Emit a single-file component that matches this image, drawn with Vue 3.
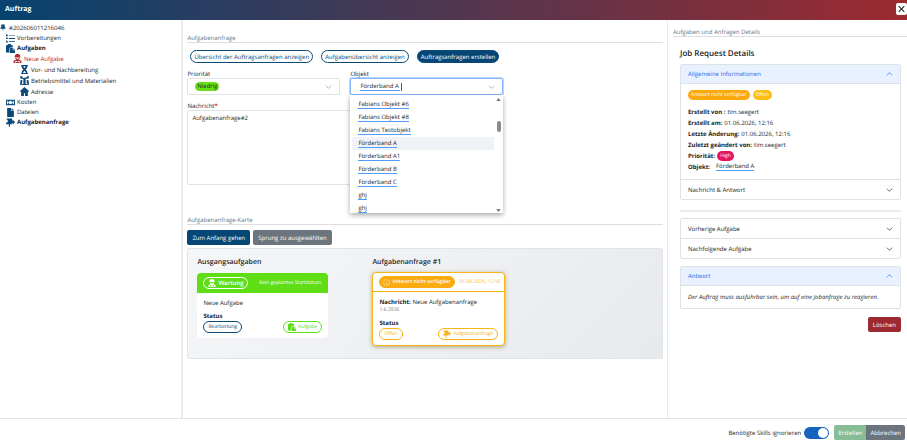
<script setup>
import { ref } from 'vue'

const tree = [
  { label: 'Vorbereitungen', icon: 'list', level: 1 },
  { label: 'Aufgaben', icon: 'paste', level: 1, strong: true },
  { label: 'Neue Aufgabe', icon: 'worker', level: 2, active: true },
  { label: 'Vor- und Nachbereitung', icon: 'hourglass', level: 3 },
  { label: 'Betriebsmittel und Materialien', icon: 'tools', level: 3 },
  { label: 'Adresse', icon: 'home', level: 3 },
  { label: 'Kosten', icon: 'money', level: 1 },
  { label: 'Dateien', icon: 'file', level: 1 },
  { label: 'Aufgabenanfrage', icon: 'request', level: 1, strong: true },
]

const icons = {
  pin: 'M3 0h10v2h-1l1 5 2 2v2H9v4l-1 1-1-1v-4H1V9l2-2 1-5H3z',
  list: 'M0 1h3v3H0zM5 2h11v1H5zM0 6h3v3H0zM5 7h11v2H5zM0 12h3v3H0zM5 13h11v1H5z',
  paste: 'M0 2h3a3 3 0 0 1 6 0h3v4H8L6 8v7H0zM7 7h5v4h4v5H7zM13 7l3 3h-3z',
  worker: 'M3 5a5 5 0 0 1 3-5h4a5 5 0 0 1 3 5v1H3zM4 7h2a2 2 0 0 0 4 0h2a4 4 0 0 1-2 3l5 2v4h-3v-3l-2-1-2 2-2-2-2 1v3H1v-4l5-2a4 4 0 0 1-2-3zM5 14h6v2H5z',
  hourglass: 'M2 0h12v2h-1c0 3-1 4-3 6 2 2 3 3 3 6h1v2H2v-2h1c0-3 1-4 3-6-2-2-3-3-3-6H2zM6 2l1 3h2l1-3zM8 10l-3 4h6z',
  tools: 'M0 0l4 1 1 2h6l1-2 4-1-1 5h-5v9h3v2H3v-2h3V5H1zM1 7h3v5l-2 4H0zM12 7h3l1 9h-2l-2-4z',
  home: 'M8 0l8 7-1 2-1-1v8H9v-5H7v5H2V8L1 9 0 7z',
  money: 'M0 3h16v10H0zM2 5v6h1l2-3-2-3zM8 5a3 3 0 1 0 0 6 3 3 0 0 0 0-6zM13 5l-2 3 2 3h1V5z',
  file: 'M2 0h7v5h5v11H2zM10 0l4 4h-4z',
  request: 'M1 1h10v4h1V3l4 4-4 5V9h-2l1 2H7v4l-1 1-1-1v-4H0V9l3-2V3H1z',
}

const options = ['Fabians Objekt #6', 'Fabians Objekt #8', 'Fabians Testobjekt', 'Förderband A', 'Förderband A1', 'Förderband B', 'Förderband C', 'ghj', 'ghj']

const details = [
  ['Erstellt von :', 'tim.seegert'],
  ['Erstellt am:', '01.06.2026, 12:16'],
  ['Letzte Änderung:', '01.06.2026, 12:16'],
  ['Zuletzt geändert von:', 'tim.seegert'],
]

const objekt = ref('Förderband A')
const nachricht = ref('Aufgabenanfrage#2')
const ignoreSkills = ref(true)
</script>

<template>
  <div class="dialog">
    <header class="titlebar">
      <h1>Auftrag</h1>
      <button class="close" aria-label="Schließen">
        <svg viewBox="0 0 10 10"><path d="M1 1l8 8M9 1L1 9" /></svg>
      </button>
    </header>

    <div class="body">
      <nav class="tree" aria-label="Auftrag">
        <a href="#" class="node root"><svg class="icon" viewBox="0 0 16 16"><path :d="icons.pin" /></svg>#202606011216046</a>
        <a
          v-for="n in tree" :key="n.label" href="#"
          class="node" :class="['level' + n.level, { strong: n.strong, active: n.active }]"
        >
          <svg class="icon" viewBox="0 0 16 16"><path fill-rule="evenodd" :d="icons[n.icon]" /></svg>{{ n.label }}
        </a>
      </nav>

      <main class="main">
        <h2 class="legend">Aufgabenanfrage</h2>
        <div class="pills">
          <button class="pill">Übersicht der Auftragsanfragen anzeigen</button>
          <button class="pill">Aufgabenübersicht anzeigen</button>
          <button class="pill filled">Auftragsanfragen erstellen</button>
        </div>

        <div class="fields">
          <div class="field">
            <label for="prio">Priorität</label>
            <div class="control">
              <select id="prio" class="prio"><option>Niedrig</option></select>
              <svg class="chevron" viewBox="0 0 10 6"><path d="M1 1l4 4 4-4" /></svg>
            </div>
          </div>
          <div class="field">
            <label for="objekt">Objekt</label>
            <div class="control focused">
              <input id="objekt" v-model="objekt" class="objekt" role="combobox" aria-expanded="true">
              <span class="caret"></span>
              <svg class="chevron" viewBox="0 0 10 6"><path d="M1 1l4 4 4-4" /></svg>
            </div>
            <div class="menu">
              <ul role="listbox">
                <li v-for="(o, i) in options" :key="i" role="option" :class="{ selected: i === 3 }"><span>{{ o }}</span></li>
              </ul>
              <div class="scroll">
                <svg viewBox="0 0 6 4"><path d="M3 0l3 4H0z" /></svg>
                <i class="thumb"></i>
                <svg viewBox="0 0 6 4"><path d="M0 0h6L3 4z" /></svg>
              </div>
            </div>
          </div>
        </div>

        <label class="message-label" for="msg">Nachricht<b>*</b></label>
        <textarea id="msg" v-model="nachricht" class="message"></textarea>

        <h2 class="legend second">Aufgabenanfrage-Karte</h2>
        <div class="actions">
          <button class="btn navy">Zum Anfang gehen</button>
          <button class="btn gray">Sprung zu ausgewählten</button>
        </div>

        <section class="map">
          <div class="column">
            <h3>Ausgangsaufgaben</h3>
            <article class="card green">
              <div class="card-head">
                <span class="tag bold"><svg class="icon" viewBox="0 0 16 16"><path fill-rule="evenodd" :d="icons.worker" /></svg>Wartung</span>
                <span>Kein geplantes Startdatum.</span>
              </div>
              <div class="card-body">
                <p class="card-title">Neue Aufgabe</p>
                <strong>Status</strong>
                <div class="card-foot">
                  <span class="tag blue">Bearbeitung</span>
                  <span class="tag lime"><svg class="icon" viewBox="0 0 16 16"><path :d="icons.paste" /></svg>Aufgabe</span>
                </div>
              </div>
            </article>
          </div>
          <div class="column">
            <h3>Aufgabenanfrage #1</h3>
            <article class="card amber">
              <div class="card-head">
                <span class="tag bold solid"><svg class="info" viewBox="0 0 16 16"><circle cx="8" cy="8" r="7" /><path d="M8 7v5M8 4v1" /></svg>Antwort nicht verfügbar</span>
                <span>01.06.2026, 12:16</span>
              </div>
              <div class="card-body">
                <p class="card-title"><b>Nachricht:</b> Neue Aufgabenanfrage</p>
                <p class="date">1.6.2026</p>
                <strong>Status</strong>
                <div class="card-foot">
                  <span class="tag gold">Offen</span>
                  <span class="tag gold"><svg class="icon" viewBox="0 0 16 16"><path :d="icons.request" /></svg>Aufgabenanfrage</span>
                </div>
              </div>
            </article>
          </div>
        </section>
      </main>

      <aside class="side">
        <h2 class="legend">Aufgaben und Anfragen Details</h2>
        <div class="side-inner">
          <h3 class="side-title">Job Request Details</h3>
          <div class="accordion">
            <button class="acc-head open">Allgemeine Informationen<svg class="chevron" viewBox="0 0 10 6"><path d="M1 5l4-4 4 4" /></svg></button>
            <div class="acc-body">
              <div class="badges"><span class="badge orange">Antwort nicht verfügbar</span><span class="badge yellow">Offen</span></div>
              <p v-for="d in details" :key="d[0]"><b>{{ d[0] }}</b> {{ d[1] }}</p>
              <p><b>Priorität:</b> <span class="badge pink">High</span></p>
              <p class="object"><b>Objekt:</b> <a href="#">Förderband A</a></p>
            </div>
            <button class="acc-head">Nachricht &amp; Antwort<svg class="chevron" viewBox="0 0 10 6"><path d="M1 1l4 4 4-4" /></svg></button>
          </div>
          <hr>
          <div class="accordion">
            <button class="acc-head">Vorherige Aufgabe<svg class="chevron" viewBox="0 0 10 6"><path d="M1 1l4 4 4-4" /></svg></button>
            <button class="acc-head">Nachfolgende Aufgabe<svg class="chevron" viewBox="0 0 10 6"><path d="M1 1l4 4 4-4" /></svg></button>
          </div>
          <div class="accordion answer">
            <button class="acc-head open">Antwort<svg class="chevron" viewBox="0 0 10 6"><path d="M1 5l4-4 4 4" /></svg></button>
            <p class="note">Der Auftrag muss ausführbar sein, um auf eine Jobanfrage zu reagieren.</p>
          </div>
          <button class="btn red">Löschen</button>
        </div>
      </aside>
    </div>

    <footer class="footer">
      <label for="skills">Benötigte Skills ignorieren</label>
      <input id="skills" v-model="ignoreSkills" class="switch" type="checkbox">
      <div class="group">
        <button class="btn create">Erstellen</button>
        <button class="btn gray">Abbrechen</button>
      </div>
    </footer>
  </div>
</template>

<style>
body { margin: 0; background: #fff; }
</style>

<style scoped>
* { box-sizing: border-box; }
.dialog { display: flex; flex-direction: column; min-height: 100vh; font: 6px/8px "Open Sans", "Noto Sans", sans-serif; text-rendering: geometricPrecision; color: #212529; }
h1, h2, h3, p, ul { margin: 0; padding: 0; }
button, input, select, textarea { font: inherit; color: inherit; margin: 0; text-rendering: inherit; }
button { cursor: pointer; white-space: nowrap; }
a { color: inherit; text-decoration: none; }
b, strong { font-weight: 700; }
.icon { width: 8px; height: 8px; flex: none; fill: currentColor; }

.titlebar { display: flex; align-items: center; justify-content: space-between; height: 20px; padding: 0 0 0 5px; background: linear-gradient(90deg, #06436f, #9c2a30); color: #fff; }
.titlebar h1 { font-size: 7px; line-height: 12px; font-weight: 700; }
.close { display: flex; width: 11px; height: 12px; padding: 2px; margin-bottom: 3px; border: 0; border-radius: 2px; background: #fff; }
.close svg { width: 100%; stroke: #222; stroke-width: 1.5; }

.body { display: flex; flex: 1; }
.tree { flex: 0 0 20%; padding-top: 2px; }
.node { display: flex; align-items: center; gap: 2px; height: 11px; padding-left: 6px; }
.node .icon { width: 9px; height: 9px; fill: #0b4a78; }
.root { padding-left: 0; gap: 3px; }
.root .icon { width: 6px; height: 7px; }
.level1 { height: 10px; }
.level2 { padding-left: 13px; }
.level3 { padding-left: 20px; }
.strong { font-weight: 700; }
.active { color: #b02a30; }
.active .icon { fill: #b02a30; }

.main { flex: 1; min-width: 0; padding: 14px 4px 12px 4px; border-left: 2px solid #e9ebed; border-right: 1px solid #e9ebed; }
.legend { border-bottom: 1px solid #dedede; font-size: 6px; line-height: 8px; font-weight: 400; color: #6c757d; }
.pills { display: flex; gap: 8px; padding: 7px 3px 0; }
.pill { height: 13px; padding: 0 3px; border: 1px solid #0b4a78; border-radius: 7px; background: #fff; color: #0b4a78; }
.filled { background: #064674; color: #fff; font-weight: 500; }
.fields { display: grid; grid-template-columns: 153px 153px; gap: 10px; padding-top: 7px; }
.field { position: relative; }
.field label, .message-label { display: block; line-height: 8px; }
.control { display: flex; align-items: center; height: 17px; padding: 0 7px; border: 1px solid #dfe3e7; border-radius: 2px; }
.focused { border-color: #86b7fe; box-shadow: 0 0 0 1px #b6d4fe; }
.control .chevron { margin-left: auto; }
.chevron { width: 7px; height: 4px; flex: none; fill: none; stroke: currentColor; stroke-width: 1; }
.control .chevron { color: #8b9299; }
.prio { appearance: none; width: 24px; height: 9px; padding: 0; text-align: center; border: 0; border-radius: 5px; background: #66e014; line-height: 9px; }
.objekt { width: 40px; height: 9px; margin-left: 2px; padding: 0; border: 0; border-bottom: 1px solid #4f9cf9; outline: 0; background: transparent; }
.caret { width: 1px; height: 8px; margin-left: 1px; background: #555; }
.menu { position: absolute; z-index: 2; top: 100%; left: 0; right: 0; display: flex; height: 118px; padding: 3px 0 0 2px; overflow: hidden; background: #fff; box-shadow: 0 2px 5px rgba(0, 0, 0, .35); }
.menu ul { flex: 1; list-style: none; }
.menu li { display: flex; align-items: center; height: 13px; padding-left: 6px; }
.menu li span, .object a { border-bottom: 1px solid #4f9cf9; }
.menu .selected { background: #eff3f7; }
.scroll { display: flex; flex-direction: column; align-items: center; width: 9px; padding-bottom: 1px; }
.scroll svg { width: 5px; height: 3px; fill: #777; }
.thumb { width: 4px; height: 11px; margin: 20px 0 auto; border-radius: 2px; background: #8b8b8b; }
.message-label { margin-top: 7px; }
.message-label b { color: #e02020; }
.message { display: block; width: 316px; height: 75px; padding: 3px 4px; border: 1px solid #dfe3e7; border-radius: 2px; resize: none; }
.second { margin-top: 31px; }
.actions { display: flex; gap: 3px; padding: 5px 0 3px; }
.btn { height: 15px; padding: 0 5px; border: 0; border-radius: 2px; color: #fff; font-weight: 500; }
.navy { background: #064674; }
.gray { background: #6c757d; }
.red { display: block; margin: 8px 0 0 auto; background: #9c2a30; }

.map { display: flex; gap: 42px; height: 111px; padding: 9px; border: 1px solid #e1e4e7; border-radius: 2px; background: linear-gradient(135deg, #f5f6f8, #e7eaed); }
.column { width: 133px; }
.column h3 { font-size: 7px; line-height: 10px; font-weight: 600; }
.card { border-radius: 4px; background: #fff; overflow: hidden; }
.green { margin-top: 5px; width: 131px; }
.card-head { display: flex; align-items: center; justify-content: space-between; height: 20px; padding: 0 6px; font-size: 5px; white-space: nowrap; }
.green .card-head { background: #60de15; color: #fff; }
.amber { margin-top: 4px; border: 1px solid #fbb415; box-shadow: 0 1px 4px rgba(120, 90, 0, .5); }
.amber .card-head { height: 19px; padding: 0 4px 0 6px; border-bottom: 1px solid #fbb415; color: #fbb415; }
.card-body { padding: 6px 6px 5px; }
.card-title { line-height: 9px; }
.green strong { display: block; margin-top: 4px; }
.date { font-size: 5px; line-height: 7px; color: #6c757d; }
.amber strong { display: block; margin-top: 5px; }
.card-foot { display: flex; justify-content: space-between; padding-top: 1px; }
.tag { display: inline-flex; align-items: center; gap: 2px; height: 12px; padding: 0 4px; border: 1px solid currentColor; border-radius: 6px; font-size: 5px; }
.bold { font-weight: 600; font-size: 6px; }
.solid { padding: 0 3px; background: #fbab10; border-color: #fbab10; color: #fff; font-size: 5px; }
.info { width: 7px; height: 7px; fill: none; stroke: currentColor; stroke-width: 1; }
.blue { color: #0b4a78; }
.lime { color: #60de15; }
.gold { color: #fbb415; }

.side { flex: 0 0 239px; padding: 8px 0 8px 5px; }
.side-inner { padding: 12px 6px 0 7px; }
.side-title { font-size: 8px; line-height: 10px; font-weight: 600; }
.accordion { margin-top: 5px; border: 1px solid #dee2e6; border-radius: 2px; overflow: hidden; }
.acc-head { display: flex; align-items: center; justify-content: space-between; width: 100%; height: 19px; padding: 0 7px; border: 0; background: #fff; }
.acc-head + .acc-head, .acc-body + .acc-head { height: 20px; border-top: 1px solid #dee2e6; }
.open { background: #e7f1ff; color: #1b6fe8; border-bottom: 1px solid #dee2e6; }
.acc-body { padding: 6px 7px 7px; }
.acc-body p { display: flex; align-items: center; gap: 2px; min-height: 11px; }
.badges { display: flex; gap: 3px; margin-bottom: 6px; }
.badge { height: 10px; padding: 0 3px; border-radius: 5px; color: #fff; font-size: 5px; line-height: 10px; }
.orange { background: #fda90b; }
.yellow { background: #fdbe14; }
.pink { background: #e5145f; }
.acc-body .object { gap: 6px; }
hr { margin: 10px 0 6px; border: 0; border-top: 2px solid #e9ebed; }
.answer { margin-top: 7px; }
.note { padding: 7px; font-style: italic; white-space: nowrap; }

.footer { display: flex; align-items: center; justify-content: flex-end; height: 24px; padding: 4px 2px 0 0; border-top: 1px solid #e1e4e7; }
.switch { appearance: none; width: 25px; height: 12px; margin: 0 5px 0 3px; padding: 1px; border-radius: 6px; background: #1565c0; }
.switch::before { content: ""; display: block; width: 10px; height: 10px; margin-left: auto; border-radius: 50%; background: #fff; }
.group { display: flex; }
.group .btn { padding: 0 4px; }
.group .btn:first-child { border-radius: 2px 0 0 2px; }
.group .btn:last-child { border-radius: 0 2px 2px 0; }
.create { background: #86bd95; }
</style>
